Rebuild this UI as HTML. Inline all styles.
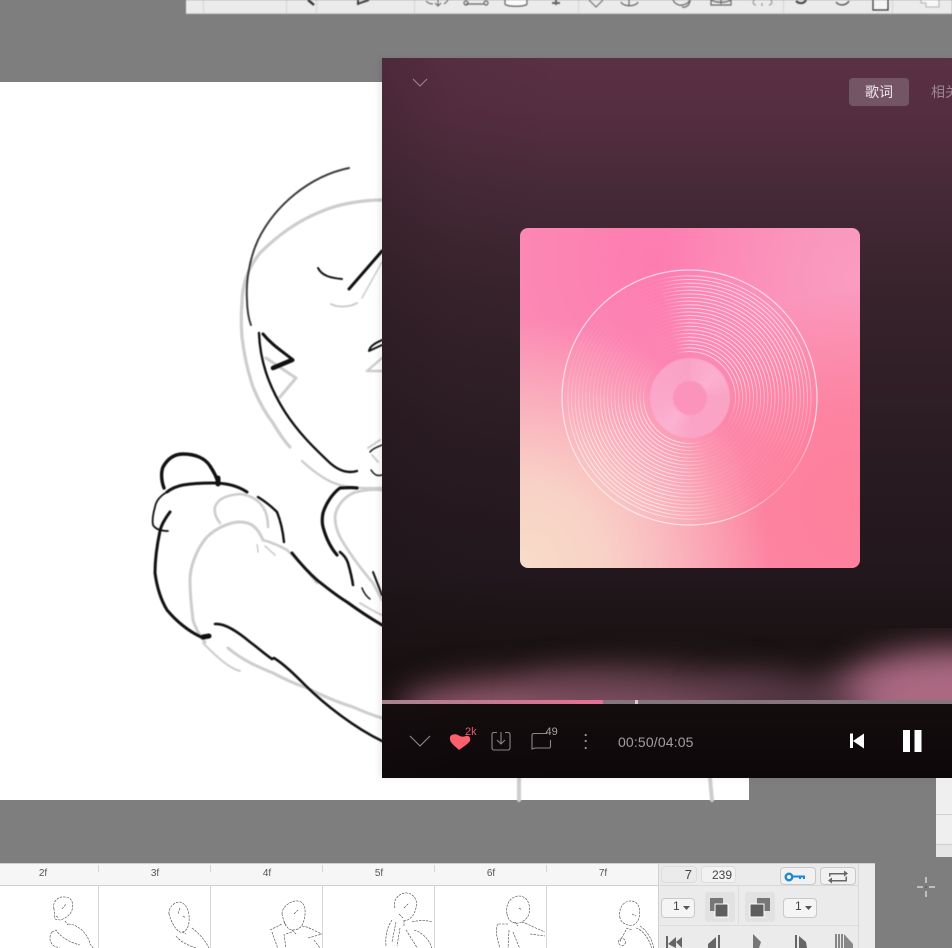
<!DOCTYPE html>
<html><head><meta charset="utf-8">
<style>
html,body{margin:0;padding:0;width:952px;height:948px;overflow:hidden;background:#7f7e7f;font-family:"Liberation Sans","Noto Sans CJK SC",sans-serif}
.a{position:absolute}
#tb{left:186px;top:0;width:766px;height:13px;background:#ebebeb;border-bottom:1px solid #d2d2d2;filter:blur(.4px)}
.sp{top:0;width:1px;height:13px;background:#d5d5d5}
#canvas{left:0;top:82px;width:749px;height:718px;background:#fff}
#player{left:382px;top:58px;width:570px;height:720px;overflow:hidden;box-shadow:-3px 0 6px rgba(0,0,0,.08);background:linear-gradient(180deg,#5a3044 0%,#562e41 7%,#482a38 17%,#38232c 32%,#2b1c23 52%,#21171c 72%,#17100f 85%,#0d070a 100%)}
#shade{left:0;top:0;width:570px;height:720px;background:linear-gradient(90deg,rgba(25,15,20,.2) 0,rgba(25,15,20,.06) 70px,rgba(25,15,20,0) 180px)}
#cover{left:138px;top:170px;width:340px;height:340px;border-radius:8px;overflow:hidden;background:
radial-gradient(circle at 0% 100%,#f8dcc8 0,rgba(248,220,200,.85) 18%,rgba(248,210,200,0) 52%),
radial-gradient(circle at 100% 82%,#fd7f9b 0,rgba(253,127,155,.8) 22%,rgba(253,127,155,0) 50%),
radial-gradient(circle at 100% 15%,#fa9cc0 0,rgba(250,156,192,0) 45%),
radial-gradient(circle at 40% 10%,#fd7cb0 0,rgba(253,124,176,0) 70%),
#fb92b6}
#rings{left:41px;top:41px;width:257px;height:257px;
-webkit-mask-image:conic-gradient(from 0deg,#000 0deg,#000 70deg,rgba(0,0,0,.5) 95deg,rgba(0,0,0,.08) 125deg,rgba(0,0,0,.14) 165deg,#000 195deg,#000 245deg,rgba(0,0,0,.3) 275deg,rgba(0,0,0,.03) 320deg,rgba(0,0,0,.1) 345deg,#000 360deg);mask-image:conic-gradient(from 0deg,#000 0deg,#000 70deg,rgba(0,0,0,.5) 95deg,rgba(0,0,0,.08) 125deg,rgba(0,0,0,.14) 165deg,#000 195deg,#000 245deg,rgba(0,0,0,.3) 275deg,rgba(0,0,0,.03) 320deg,rgba(0,0,0,.1) 345deg,#000 360deg)}
#outer{left:41px;top:41px;width:257px;height:257px;-webkit-mask-image:conic-gradient(#000 0,#000 100deg,rgba(0,0,0,.25) 130deg,#000 165deg,#000 360deg);mask-image:conic-gradient(#000 0,#000 100deg,rgba(0,0,0,.25) 130deg,#000 165deg,#000 360deg)}
#hub{left:130px;top:130px;width:80px;height:80px;border-radius:50%;background:conic-gradient(#fba5c8 0,#fcb0d0 50deg,#f9a3c5 90deg,#fba3c6 180deg,#fcb2d1 215deg,#fba8ca 260deg,#f9a2c4 360deg);filter:blur(.5px)}
#hole{left:153px;top:153px;width:34px;height:34px;border-radius:50%;background:#fb93bb;filter:blur(.4px)}
#glow{left:0;top:570px;width:570px;height:72px;overflow:hidden}
#glow i{position:absolute;display:block;border-radius:50%;filter:blur(16px)}
#prog{left:0;top:642px;width:570px;height:4px;background:#85757c}
#tab{left:467px;top:20px;width:60px;height:28px;border-radius:4px;background:#745566;color:#f3e8ec;font-size:14px;line-height:28px;text-align:center}
#tab2{left:549px;top:20px;color:#9a8790;font-size:14px;line-height:28px;white-space:nowrap}
#time{left:236px;top:675px;color:#a29da0;font-size:14px;line-height:18px;letter-spacing:.15px}
.cnt{color:#a9a3a6;font-size:11px;line-height:11px}
#tl{left:0;top:863px;width:875px;height:85px;background:#fff;border-top:1px solid #cfcfcf;box-sizing:border-box;overflow:hidden}
#hd{left:0;top:0;width:658px;height:21px;background:#f6f6f6;border-bottom:1px solid #d0d0d0}
.f{top:4px;font-size:10px;line-height:12px;color:#555;width:30px;text-align:center}
.hs{top:1px;width:1px;height:7px;background:#d6d6d6}
.vs{top:22px;width:1px;height:63px;background:#d6d6d6}
#side{left:658px;top:0;width:217px;height:85px;background:#ebebeb;filter:blur(.3px)}
.box{border:1px solid #c9c9c9;border-radius:4px;box-sizing:border-box;background:#efefef;color:#444;font-size:12px;text-align:right}
#rp{left:936px;top:778px;width:16px;height:79px;background:#efefef}
</style></head>
<body>
<div class="a" id="canvas"></div>

<!-- main sketch -->
<svg class="a" style="left:0;top:0;filter:blur(.5px)" width="952" height="948" viewBox="0 0 952 948" fill="none" stroke-linecap="round" stroke-linejoin="round">
<g stroke="#cdcdcd" stroke-width="3">
<path d="M383 200C365 200 340 203 320 212C295 222 275 238 260 253C248 268 242 285 242 303C241 315 241 325 242 337C244 355 248 372 253 387C259 402 266 414 273 423C279 433 284 441 290 447" stroke-width="3.200"/>
<path d="M331 304C338 308 350 307 357 303" stroke-width="2"/>
<path d="M362 298L382 262" stroke-width="1.600"/>
<path d="M266 358L296 378L280 397" stroke-width="3"/>
<path d="M367 371L382 358M367 371L382 371" stroke-width="2.400"/>
<path d="M368 448L380 440M372 455L378 462" stroke-width="2"/>
<path d="M302 461C315 473 328 482 340 485C355 489 370 488 382 488" stroke-width="2.400"/>
<path d="M220 523C216 518 214 512 215 507C218 498 228 495 240 494C250 495 258 500 263 507C267 513 268 520 268 527" stroke-width="2.600"/>
<path d="M190 580C190 565 198 547 207 537C216 528 230 522 240 522C250 522 257 526 263 540" stroke-width="3"/>
<path d="M190 580C190 598 192 610 193 620C196 630 200 636 205 642" stroke-width="3"/>
<path d="M263 540C270 542 280 546 287 550C298 560 308 572 317 583" stroke-width="2.600"/>
<path d="M257 545C258 548 258 550 258 552M265 546L275 555" stroke-width="1.600"/>
<path d="M203 643C215 655 228 668 240 671" stroke-width="2"/>
<path d="M228 648C242 660 258 667 273 673C288 681 298 685 307 688C325 697 340 703 353 707C362 711 372 715 382 718" stroke-width="3"/>
<path d="M382 490C372 489 362 490 353 493C343 498 336 507 335 517C335 525 337 531 340 537C350 555 362 570 373 583L382 600" stroke-width="2.800"/>
<path d="M360 603C368 608 375 612 382 615" stroke-width="2"/>
<path d="M519 778V800" stroke-width="4"/><path d="M710 778L712 800" stroke-width="4"/>
</g>
<g stroke="#111">
<path d="M349 168C310 176 275 205 258 240C248 262 246 285 247 300C247 310 249 320 251 325" stroke-width="2" stroke="#3a3a3a"/>
<path d="M318 268C322 276 331 278 342 279" stroke-width="2"/>
<path d="M349 289L382 251" stroke-width="3"/>
<path d="M369 351C370 345 378 342 382 340M369 351L382 345" stroke-width="2"/>
<path d="M259 333C260 360 268 385 285 412C298 432 312 446 330 463C338 470 347 474 357 471" stroke-width="2.400"/>
<path d="M263 334C272 345 282 351 293 360C285 364 277 366 273 368" stroke-width="3"/>
<path d="M273 368L292 360" stroke-width="4.600"/>
<path d="M370 452C373 448 378 447 382 445M371 470C375 476 378 476 382 475" stroke-width="1.500"/>
<path d="M164 488C161 480 161 472 163 467C168 458 175 454 183 454C195 454 205 458 210 466C214 472 217 478 218 483" stroke-width="3.400"/>
<path d="M218 478L218 484" stroke-width="5"/>
<path d="M167 492C172 488 178 486 183 485C195 483 205 483 213 483C226 483 238 486 247 492" stroke-width="3"/>
<path d="M167 492C160 496 156 501 155 507C153 514 152 520 153 525C156 530 162 531 168 531" stroke-width="1.800"/>
<path d="M170 512C164 520 161 526 160 531C157 545 155 560 155 573C157 588 161 600 167 610C177 622 190 632 203 638L210 636" stroke-width="3"/>
<path d="M203 637L209 636" stroke-width="5"/>
<path d="M258 497C266 502 272 507 277 512C281 522 283 532 284 542" stroke-width="2.400"/>
<path d="M292 553C300 563 308 572 317 580C327 588 337 596 347 602C358 610 370 618 382 625" stroke-width="3"/>
<path d="M215 624C225 623 238 632 250 642C258 648 266 655 272 659L274 658C285 665 295 675 305 685C325 705 355 728 382 741" stroke-width="2.600"/>
<path d="M357 488C350 487 345 488 340 488C333 493 326 503 323 513C322 518 322 523 323 527C326 538 331 548 337 555" stroke-width="3.200"/>
<path d="M340 552C345 556 347 560 348 563C350 570 352 578 353 585" stroke-width="2.600"/>
<path d="M373 572L382 595" stroke-width="2"/>
<path d="M362 588C364 593 367 597 370 599" stroke-width="1.500"/>
</g>
</svg>

<div class="a" id="tb">
<div class="a sp" style="left:17px"></div><div class="a sp" style="left:100px"></div><div class="a sp" style="left:130px"></div><div class="a sp" style="left:228px"></div><div class="a sp" style="left:392px"></div><div class="a sp" style="left:597px"></div><div class="a sp" style="left:706px"></div>
<svg class="a" style="left:0;top:0" width="766" height="13" fill="none" stroke="#666" stroke-width="1.200">
<path d="M122 0L128 5" stroke="#333" stroke-width="2.400"/>
<path d="M171 4L183 0M172 0L172 5" stroke="#444" stroke-width="2"/>
<path d="M240 1C242 3 244 4 247 4M252 0V6M249 3L252 6L255 3M258 4C259 3 261 2 262 0" stroke-width="1"/>
<path d="M280 4H298"/><circle cx="280" cy="3" r="2"/><circle cx="300" cy="3" r="2"/>
<path d="M319 0V4C320 7 340 7 341 4V0" fill="#fafafa"/>
<path d="M370 0V5M366 3H374" stroke-width="2"/>
<path d="M403 0L410 7L417 0" stroke="#777"/>
<path d="M435 2C437 7 450 7 452 2M443 0V6"/>
<path d="M487 0C489 4 493 6 497 5C501 4 503 2 504 0C504 5 500 8 496 7"/>
<path d="M525 0C530 3 540 3 545 0V5H525ZM535 0V4"/>
<path d="M568 0C566 3 568 5 570 5M585 0C587 3 585 5 583 5M576 3V6" stroke="#999"/>
<path d="M610 1C613 4 618 4 620 0" stroke="#444" stroke-width="2"/>
<path d="M650 2C653 6 660 6 663 1" stroke="#555" stroke-width="1.400"/>
<path d="M687 0V10H702V0" stroke="#333" fill="#f5f5f5"/>
<path d="M735 0V3H740V7H753V0" fill="#f8f8f8" stroke="#bbb"/>
</svg>
</div>

<div class="a" id="player">
<div class="a" id="shade"></div>
<svg class="a" style="left:30px;top:20px" width="16" height="10" fill="none" stroke="#a1878f" stroke-width="1"><path d="M1 1L8 8L15 1"/></svg>
<div class="a" id="tab">歌词</div>
<div class="a" id="tab2">相关</div>
<div class="a" id="cover">
<div class="a" id="rings"><svg width="257" height="257" fill="none" stroke="#fff" stroke-opacity=".6" stroke-width="1">
<circle cx="128.500" cy="128.500" r="46"/><circle cx="128.500" cy="128.500" r="49.600"/><circle cx="128.500" cy="128.500" r="53.200"/><circle cx="128.500" cy="128.500" r="56.800"/><circle cx="128.500" cy="128.500" r="60.400"/><circle cx="128.500" cy="128.500" r="64"/><circle cx="128.500" cy="128.500" r="67.600"/><circle cx="128.500" cy="128.500" r="71.200"/><circle cx="128.500" cy="128.500" r="74.800"/><circle cx="128.500" cy="128.500" r="78.400"/><circle cx="128.500" cy="128.500" r="82"/><circle cx="128.500" cy="128.500" r="85.600"/><circle cx="128.500" cy="128.500" r="89.200"/><circle cx="128.500" cy="128.500" r="92.800"/><circle cx="128.500" cy="128.500" r="96.400"/><circle cx="128.500" cy="128.500" r="100"/><circle cx="128.500" cy="128.500" r="103.600"/><circle cx="128.500" cy="128.500" r="107.200"/><circle cx="128.500" cy="128.500" r="110.800"/><circle cx="128.500" cy="128.500" r="114.400"/><circle cx="128.500" cy="128.500" r="118"/><circle cx="128.500" cy="128.500" r="121.600"/>
</svg></div>
<svg class="a" id="outer" width="257" height="257" fill="none"><circle cx="128.500" cy="128.500" r="127.500" stroke="#fff3f6" stroke-opacity=".72" stroke-width="1.300"/></svg>
<div class="a" id="hub"></div>
<div class="a" id="hole"></div>
</div>
<div class="a" id="glow">
<i style="left:15px;top:48px;width:345px;height:64px;background:rgba(146,90,110,.95)"></i>
<i style="left:140px;top:36px;width:260px;height:50px;background:rgba(100,66,80,.55)"></i>
<i style="left:450px;top:20px;width:250px;height:96px;background:rgba(178,110,136,.95)"></i>
<i style="left:320px;top:46px;width:170px;height:50px;background:rgba(104,68,84,.8)"></i>
</div>
<div class="a" id="prog"></div>
<div class="a" style="left:0;top:642px;width:221px;height:4px;background:linear-gradient(90deg,#a5848f 0,#bd7b92 40%,#e77096 100%)"></div>
<div class="a" style="left:253px;top:642px;width:3px;height:4px;background:#d9cdd1"></div>

<svg class="a" style="left:0;top:655px" width="570" height="65" fill="none">
<path d="M28 23L38 33L48 23" stroke="#8f8a8d" stroke-width="1.100"/>
<path d="M77 37C73 33 68 30 68 26C67 22 72 20 76 22C79 24 81 24 84 23C87 22 89 25 88 28C86 31 81 34 77 37Z" fill="#fe5f6c"/>
<path d="M115 19.500H112C111 19.500 110 20 110 21.500V35C110 36 111 37 112 37H126C127 37 128 36 128 35V21.500C128 20 127 19.500 126 19.500H123M119 19V31M115 27L119 31L123 27" stroke="#8a8588" stroke-width="1.100"/>
<path d="M165 20.500H152C151 20.500 150 21 150 22.500V36L153 35H167C168 35 168.500 34.500 168.500 33.500V27" stroke="#8a8588" stroke-width="1.100"/>
<circle cx="203.700" cy="22" r="1.100" fill="#9a9597"/><circle cx="203.700" cy="28" r="1.100" fill="#9a9597"/><circle cx="203.700" cy="35" r="1.100" fill="#9a9597"/>
<path d="M468 20.500H471V35H468ZM471 28L482 20.500V35.500Z" fill="#fff"/>
<rect x="521" y="17" width="7" height="22" fill="#fff"/><rect x="532.500" y="17" width="7" height="22" fill="#fff"/>
</svg>
<div class="a cnt" style="left:83px;top:669px;color:#e25a70">2k</div>
<div class="a cnt" style="left:163.500px;top:669px">49</div>
<div class="a" id="time">00:50/04:05</div>
</div>

<div class="a" id="rp">
<div class="a" style="left:0;top:36px;width:16px;height:1px;background:#d0d0d0"></div>
<div class="a" style="left:0;top:66px;width:16px;height:13px;background:#e6e6e6;border-top:1px solid #d0d0d0;box-sizing:border-box"></div>
</div>

<svg class="a" style="left:914px;top:875px" width="24" height="24" stroke="#fff" stroke-width="1"><path d="M3 12H9M15 12H21M12 2V8M12 16V22"/><path d="M11.500 12H12.500" stroke="#222"/></svg>

<div class="a" id="tl">
<div class="a" id="hd"></div>
<div class="a f" style="left:28px">2f</div><div class="a f" style="left:140px">3f</div><div class="a f" style="left:252px">4f</div><div class="a f" style="left:364px">5f</div><div class="a f" style="left:476px">6f</div><div class="a f" style="left:588px">7f</div>
<div class="a hs" style="left:98px"></div><div class="a hs" style="left:210px"></div><div class="a hs" style="left:322px"></div><div class="a hs" style="left:434px"></div><div class="a hs" style="left:546px"></div>
<div class="a vs" style="left:98px"></div><div class="a vs" style="left:210px"></div><div class="a vs" style="left:322px"></div><div class="a vs" style="left:434px"></div><div class="a vs" style="left:546px"></div>

<svg class="a" style="left:0;top:0;filter:blur(.3px)" width="658" height="85" fill="none" stroke="#444" stroke-width=".6" stroke-dasharray="2.500 1">
<!-- 2f -->
<path d="M54 45C52 38 58 32 65 33C71 33 74 38 72 46C70 52 64 55 60 56L55 55Z"/>
<path d="M62 45L66 40M56 52L59 54M65 57L68 61"/>
<path d="M68 60C78 60 88 70 90 80L94 85M52 68C49 72 49 78 54 82L62 85M52 68L56 66C60 72 68 78 80 81"/>
<!-- 3f -->
<path d="M169 50C168 44 174 38 180 38C187 40 190 48 189 58C188 66 184 69 180 68C176 66 172 60 169 50Z"/>
<path d="M180 44L178 50M183 52L186 54M182 68L186 70"/>
<path d="M192 64C200 70 208 80 209 85M176 72C180 78 190 82 196 84L190 85"/>
<!-- 4f -->
<path d="M282 50C282 42 292 36 298 37C306 38 306 48 304 56C302 64 298 66 292 66C288 66 284 60 282 50Z"/>
<path d="M294 50L298 46M292 66L296 70M284 58L286 62"/>
<path d="M270 66L282 60M272 68L278 85M284 70L286 85M302 62C310 63 316 68 322 70M308 74L322 70M314 76L320 84M286 70L292 68"/>
<!-- 5f -->
<path d="M395 44C392 36 400 28 407 29C414 30 418 36 416 44C414 52 410 56 404 57"/>
<path d="M404 44L408 40M399 50L403 54M404 56L404 62"/>
<path d="M392 56C388 62 385 70 386 82M396 58L392 78M400 64L397 82M412 58C420 56 426 56 432 58M414 66C422 68 430 76 432 85M406 66L418 85"/>
<!-- 6f -->
<path d="M507 50C505 40 511 32 519 32C527 32 531 40 529 50C527 56 520 60 515 59C511 58 508 56 507 50Z"/>
<path d="M519 44L522 46M515 58L518 62"/>
<path d="M498 60C494 66 498 76 500 85M508 60L498 60M509 66L508 85M513 68L520 85M522 58C528 60 535 64 545 68M530 70L545 72"/>
<!-- 7f -->
<path d="M620 54C618 44 624 36 632 37C639 38 641 46 639 54C637 60 632 63 628 61C624 60 621 58 620 54Z"/>
<path d="M632 50L636 52M626 64L632 66"/>
<path d="M626 66C622 74 620 76 620 78M636 64C642 66 648 72 652 85M640 62C646 66 652 74 654 85"/>
<circle cx="622" cy="78" r="3.500"/>
</svg>

<div class="a" id="side">
<div class="a" style="left:2px;top:21px;width:198px;height:1px;background:#d8d8d8"></div>
<div class="a" style="left:200px;top:0;width:1px;height:85px;background:#d8d8d8"></div>
<div class="a" style="left:0;top:0;width:1px;height:85px;background:#d0d0d0"></div>
<div class="a" style="left:0;top:61px;width:200px;height:1px;background:#dcdcdc"></div>
<div class="a" style="left:80px;top:22px;width:1px;height:38px;background:#dedede"></div>
<div class="a box" style="left:3px;top:2px;width:36px;height:17px;line-height:16px;padding-right:4px;background:#ebebeb;font-size:13px;border-color:#ddd">7</div>
<div class="a box" style="left:43px;top:2px;width:35px;height:17px;line-height:16px;padding-right:3px;font-size:12px;background:#f2f2f2;border-color:#ddd">239</div>
<div class="a box" style="left:122px;top:3px;width:36px;height:18px;background:#f1f1f1"></div>
<div class="a box" style="left:162px;top:3px;width:36px;height:18px;background:#f1f1f1"></div>
<div class="a box" style="left:3px;top:34px;width:34px;height:20px;line-height:14px;text-align:left;padding-left:11px;background:#f5f5f5;font-size:12px">1</div>
<div class="a box" style="left:125px;top:34px;width:34px;height:20px;line-height:14px;text-align:left;padding-left:11px;background:#f5f5f5;font-size:12px">1</div>
<div class="a" style="left:47px;top:28px;width:30px;height:30px;background:#e2e2e2;border-radius:3px"></div>
<div class="a" style="left:87px;top:28px;width:30px;height:30px;background:#e2e2e2;border-radius:3px"></div>
<svg class="a" style="left:0;top:0" width="217" height="85">
<circle cx="131" cy="13" r="3.300" fill="none" stroke="#1c87dc" stroke-width="2.400"/>
<path d="M135 11.500H147V15H145V13.500H143V15H141V13.500H135Z" fill="#1c87dc"/>
<path d="M171 9V12.500H172.500V10.500H186V12.500L190 9.500L186 6.500V9Z" fill="#666"/>
<path d="M189 16V12.500H187.500V16H174V13.500L170 16.500L174 19.500V17.500H189Z" fill="#666"/>
<path d="M25 42H32L28.500 46Z" fill="#555"/><path d="M147 42H154L150.500 46Z" fill="#555"/>
<rect x="52" y="34" width="13" height="13" fill="#777"/><rect x="57" y="40" width="13" height="13" fill="#5e5e5e" stroke="#fff" stroke-width="1"/>
<rect x="99" y="34" width="13" height="13" fill="#777"/><rect x="92" y="40" width="14" height="13" fill="#5e5e5e" stroke="#fff" stroke-width="1"/>
<g fill="#666"><path d="M8 84V72H10V84ZM10 80L18 73V84ZM18 78L24 73V84Z"/>
<path d="M50 80L58 73V84H50ZM60 71H62V84H60Z"/>
<path d="M95 70L103 78L101 84H95Z" fill="#777"/>
<path d="M137 71H139V84H137ZM141 72L148 78L149 84H141Z"/>
<path d="M177 70H179V84H177ZM180 70H182V84H180ZM183 70H185V84H183ZM186 70L195 80V84H186Z" fill="#888"/></g>
</svg>
</div>
</div>
</body></html>
